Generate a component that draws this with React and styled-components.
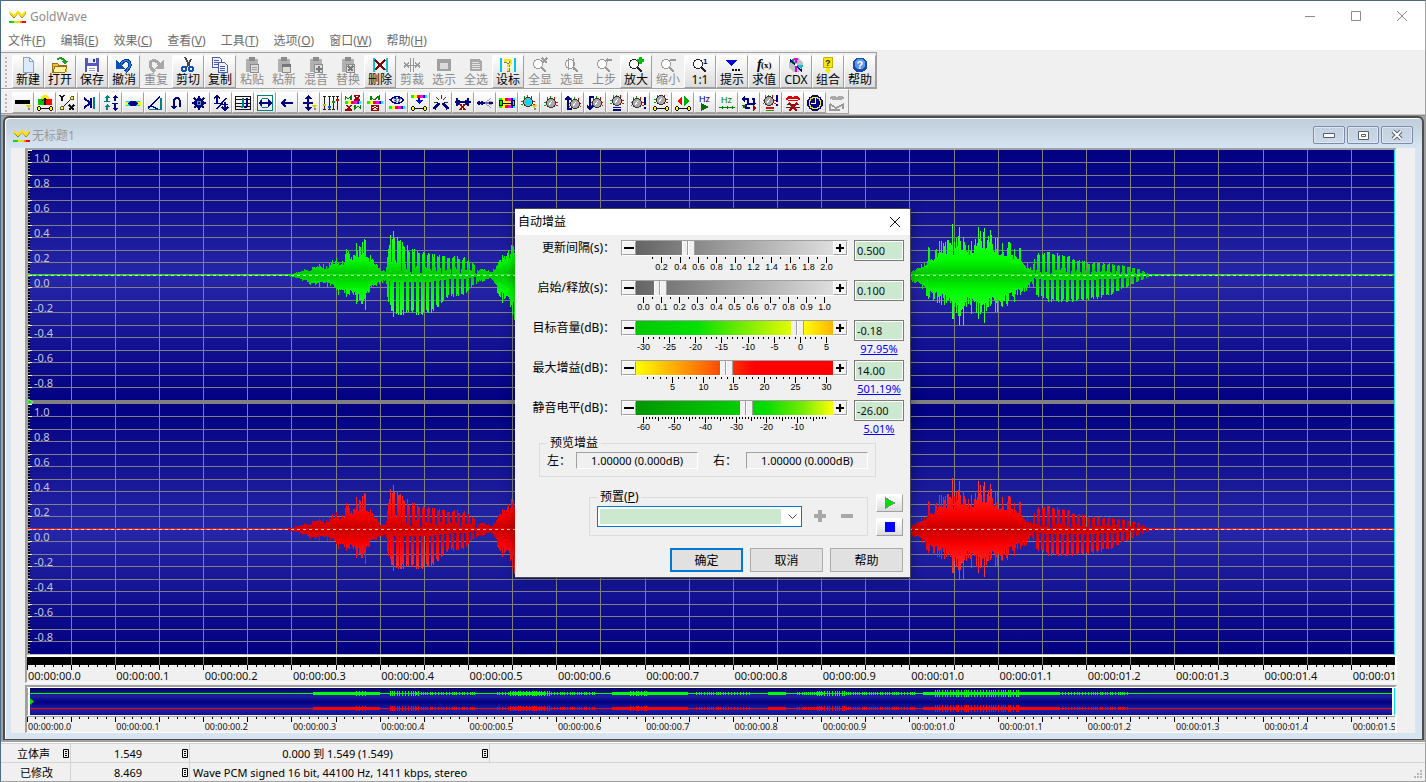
import React from 'react';
import styled, {createGlobalStyle} from 'styled-components';

const GlobalStyle = createGlobalStyle`
  * {
    box-sizing: border-box;
  }
  body {
    margin: 0;
    background: #f0f0f0;
    color: #000;
    font-family: "Noto Sans", "Noto Sans CJK SC", sans-serif;
    font-size: 12px;
  }
  button, input, select {
    font-family: inherit;
    margin: 0;
    padding: 0;
  }
`

/* ---------- main window ---------- */

const Window = styled.div`
  position: relative;
  min-height: 100vh;
  display: flex;
  flex-direction: column;
  background: #f0f0f0;
  border: 1px solid #4a6c88;
  border-right-color: #a0a0a0;
  border-bottom-color: #a0a0a0;
  overflow: hidden;
`

const TitleBar = styled.header`
  display: flex;
  align-items: center;
  height: 30px;
  padding-left: 8px;
  background: #fff;
  color: #8c8c8c;
`

const Title = styled.h1`
  flex: 1;
  margin: 0;
  padding-left: 4px;
  font-size: 12px;
  font-weight: 400;
`

const CaptionButton = styled.button`
  width: 46px;
  height: 30px;
  border: 0;
  background: none;
  color: #8c8c8c;
  display: flex;
  align-items: center;
  justify-content: center;
`

const MenuBar = styled.nav`
  display: flex;
  gap: 15px;
  height: 21px;
  padding-left: 7px;
  background: #fff;
  border-bottom: 2px solid #eee;
`

const MenuItem = styled.button`
  border: 0;
  background: none;
  color: #6d6d6d;
  font-size: 12px;
  line-height: 18px;
  white-space: nowrap;
`

const Toolbar = styled.div`
  align-self: flex-start;
  display: flex;
  height: ${({small}) => small ? 25 : 37}px;
  padding: 2px 0 1px 3px;
  background: #f0f0f0;
  border: 1px solid #a0a0a0;
  border-left: 0;
  border-top-color: ${({small}) => small ? '#fff' : '#a0a0a0'};
`

const ToolbarLine = styled.div`
  border-bottom: 1px solid #c8c8c8;
`

const Grip = styled.div`
  width: 8px;
  margin-top: 2px;
  background: repeating-linear-gradient(#b8b8b8 0 2px, transparent 2px 4px) no-repeat 1px 0 / 2px 100%;
`

const ToolButton = styled.button`
  width: 32px;
  height: 33px;
  flex: none;
  display: flex;
  flex-direction: column;
  align-items: center;
  border: 1px solid transparent;
  padding-top: 1px;
  font-size: 12px;
  line-height: 14px;
  white-space: nowrap;
  color: #000;
  background: linear-gradient(#fff, #e9e9e9 60%, #dcdcdc);
  border-color: #fff #a0a0a0 #a0a0a0 #fff;
  svg {
    flex: none;
  }
  &:disabled {
    color: #8c8c8c;
    background: none;
    border-color: transparent;
  }
`

const EffectButton = styled.button`
  width: 22px;
  height: 21px;
  flex: none;
  display: flex;
  align-items: center;
  justify-content: center;
  border: 1px solid;
  border-color: #fff #a0a0a0 #a0a0a0 #fff;
  background: linear-gradient(#fff, #e4e4e4);
  svg {
    flex: none;
  }
  &:disabled {
    background: none;
    border-color: transparent;
  }
`

/* ---------- document window ---------- */

const Workspace = styled.main`
  flex: 1;
  padding: 0 1px 2px 2px;
  background: #a0a0a0;
  border-top: 1px solid #8c8c8c;
`

const Child = styled.section`
  border: 2px solid #4d4d4d;
  border-width: 2px 2px 1px 2px;
  border-radius: 6px 6px 0 0;
  padding: 0 7px 6px 6px;
  background: linear-gradient(#bfccda, #d7e4f2 30px);
  box-shadow: inset 1px 1px 0 #fff;
`

const ChildTitle = styled.div`
  display: flex;
  align-items: center;
  height: 30px;
  gap: 2px;
  padding: 4px 2px 0;
  color: #999;
  font-size: 12px;
  svg {
    flex: none;
  }
  h2 {
    flex: 1;
    margin: 0;
    font-size: 12px;
    font-weight: 400;
  }
`

const ChildButton = styled.button`
  width: 32px;
  height: 18px;
  border: 1px solid #7d8aa8;
  border-radius: 2px;
  background: linear-gradient(#c4d0df, #ccd9e8);
  box-shadow: inset 0 0 0 1px #dfe8f2;
  display: flex;
  align-items: center;
  justify-content: center;
`

const Content = styled.div`
  padding: 0 18px 0 14px;
  background: #f0f0f0;
`

const Pane = styled.div`
  border: 2px solid #a0a0a0;
  border-right-color: #fff;
  border-bottom: 1px solid #fff;
  margin-bottom: ${({gap}) => gap || 0}px;
`

const Channels = styled.div`
  display: grid;
  grid-template-rows: 254px 251px;
  border-right: 1px solid #00e5ff;
  border-left: 1px solid #00e5ff;
`

const Layered = styled.div`
  display: grid;
  overflow: hidden;
  > * {
    grid-area: 1 / 1;
    min-width: 0;
  }
`

const Plot = styled.svg`
  display: block;
  width: 100%;
  height: ${({$h}) => $h}px;
`

const Levels = styled.div`
  padding-left: 6px;
  color: #c4c4d8;
  font-size: 11px;
  line-height: 16px;
  span {
    display: block;
    height: 25px;
  }
`

const TimeLabels = styled.div`
  display: flex;
  overflow-x: clip;
  overflow-y: visible;
  height: ${({small}) => small ? 10 : 12}px;
  font-size: ${({small}) => small ? 9 : 11}px;
  line-height: ${({small}) => small ? 10 : 12}px;
  color: #111;
  span {
    flex: 0 0 6.456%;
    padding-left: 1px;
    white-space: nowrap;
  }
`

const OverviewBox = styled.div`
  padding: 0 2px 0 2px;
  background: #fff;
  border: 1px solid #00e5ff;
  border-width: 0 1px;
`

/* ---------- status bar ---------- */

const Status = styled.footer`
  border-top: 1px solid #fff;
  background: #f0f0f0;
  font-size: 11px;
`

const StatusRow = styled.div`
  display: grid;
  grid-template-columns: 70px 119px 300px 1fr;
  height: 19px;
  border-top: 1px solid #d4d4d4;
`

const StatusCell = styled.div`
  display: flex;
  align-items: center;
  padding: 0 1px 0 3px;
  border-right: 1px solid ${({line}) => line ? '#d4d4d4' : 'transparent'};
  span {
    flex: 1;
    text-align: ${({left}) => left ? 'left' : 'center'};
    white-space: nowrap;
  }
`

const GripCell = styled.div`
  display: flex;
  align-items: flex-end;
  justify-content: flex-end;
  padding: 0 3px 3px 0;
`

/* ---------- dialog ---------- */

const Dialog = styled.form`
  position: absolute;
  top: 207px;
  left: calc(50% - 198px);
  width: 396px;
  padding-bottom: 5px;
  background: #f0f0f0;
  border: 1px solid #4a4a55;
  border-left: 0;
  box-shadow: 0 1px 12px rgba(0, 0, 0, 0.35);
`

const DialogTitle = styled.div`
  display: flex;
  justify-content: space-between;
  align-items: center;
  height: 26px;
  padding: 0 8px 2px 3px;
  background: #fff;
  font-size: 12px;
`

const CloseButton = styled.button`
  width: 14px;
  height: 14px;
  border: 0;
  background: none;
`

const Settings = styled.div`
  display: grid;
  gap: 4px;
  padding: 5px 6px 0 0;
`

const Setting = styled.div`
  display: grid;
  grid-template-columns: 100px 227px 50px;
  column-gap: 6px;
  height: 36px;
  align-items: start;
  > label {
    text-align: right;
    font-size: 12px;
    line-height: 16px;
    white-space: nowrap;
  }
`

const SliderBar = styled.div`
  display: flex;
  height: 16px;
  border: 1px solid #a0a0a0;
  border-right-color: #fff;
  border-bottom-color: #fff;
`

const StepButton = styled.button`
  width: 14px;
  height: 14px;
  flex: none;
  border: 1px solid;
  border-color: #fff #a0a0a0 #a0a0a0 #fff;
  background: #f4f4f4;
  display: flex;
  align-items: center;
  justify-content: center;
`

const Range = styled.input`
  appearance: none;
  flex: 1;
  min-width: 0;
  height: 14px;
  background: ${({$track}) => $track};
  &::-webkit-slider-thumb {
    appearance: none;
    width: 13px;
    height: 14px;
    background: linear-gradient(90deg, #fff 0 1px, #f0f0f0 1px 5px, #a0a0a0 5px 6px, #fff 6px 7px, #f0f0f0 7px 12px, #a0a0a0 12px);
  }
`

const Scale = styled.svg`
  display: block;
  width: 198px;
  height: 20px;
  margin-left: 15px;
  overflow: visible;
`

const ValueColumn = styled.div`
  text-align: center;
`

const ValueInput = styled.input`
  display: block;
  width: 50px;
  height: 21px;
  border: 1px solid #7a7a7a;
  box-shadow: inset 0 0 0 1px #fff;
  background: #cce8cf;
  padding-left: 2px;
  font-size: 11px;
  color: #111;
`

const Percent = styled.a`
  display: block;
  font-size: 11px;
  line-height: 15px;
  color: #0000ff;
`

const Group = styled.fieldset`
  min-width: 0;
  margin: 0;
  padding: 0 7px;
  border: 1px solid #dcdcdc;
  legend {
    padding: 0 3px;
    margin-left: 0;
    font-size: 12px;
    line-height: 12px;
  }
`

const PreviewGroup = styled(Group)`
  height: 40px;
  margin: 1px 34px 0 24px;
`

const PreviewRow = styled.div`
  display: grid;
  grid-template-columns: 22px 122px 34px 122px;
  column-gap: 7px;
  align-items: center;
  padding-top: 3px;
  line-height: 16px;
  label:nth-of-type(2) {
    padding-left: 8px;
    white-space: nowrap;
  }
`

const Output = styled.output`
  height: 17px;
  border: 1px solid;
  border-color: #a0a0a0 #fff #fff #a0a0a0;
  font-size: 11px;
  line-height: 15px;
  text-align: center;
`

const PresetArea = styled.div`
  display: flex;
  align-items: flex-end;
  gap: 8px;
  margin: 14px 7px 0 74px;
`

const PresetGroup = styled(Group)`
  width: 279px;
  height: 45px;
`

const PresetRow = styled.div`
  display: flex;
  align-items: center;
  padding-top: 3px;
  gap: 9px;
`

const Combo = styled.div`
  position: relative;
  width: 205px;
  height: 21px;
  svg {
    position: absolute;
    right: 5px;
    top: 8px;
    pointer-events: none;
  }
`

const Select = styled.select`
  appearance: none;
  width: 205px;
  height: 21px;
  border: 1px solid #0078d7;
  border-radius: 0;
  background: linear-gradient(#cce8cf, #cce8cf) no-repeat 2px 2px / 181px 15px #fff;
`

const FlatButton = styled.button`
  width: 18px;
  height: 18px;
  border: 0;
  background: none;
`

const PlayColumn = styled.div`
  display: grid;
  gap: 6px;
`

const PlayButton = styled.button`
  width: 27px;
  height: 18px;
  border: 1px solid;
  border-color: #fff #a0a0a0 #a0a0a0 #fff;
  background: linear-gradient(#fff, #dcdcdc);
  display: flex;
  align-items: center;
  justify-content: center;
`

const Actions = styled.div`
  display: flex;
  justify-content: flex-end;
  gap: 7px;
  margin: 12px 7px 0 0;
`

const ActionButton = styled.button`
  width: 73px;
  height: 24px;
  font-size: 12px;
  background: #e1e1e1;
  color: #000;
  border: ${({primary}) => primary ? '2px solid #0078d7' : '1px solid #adadad'};
`

/* ---------- icons ---------- */

// each part is [colour, path, stroke width]; no width means a filled shape,
// and an object in place of the path is a piece of text
const Icon = ({parts, size = 16}) => (
    <svg width={size} height={size} viewBox="0 0 16 16" shapeRendering="crispEdges" aria-hidden="true">
        {parts.map(([color, d, width], i) => {
            if (typeof d === 'object') {
                return <text key={i} x={d.x} y={d.y} fill={color} fontSize={d.s} fontWeight={d.w || 700}
                             fontStyle={d.i ? 'italic' : 'normal'}
                             fontFamily={d.f || 'Liberation Sans'}>{d.t}</text>
            }
            return width
                ? <path key={i} d={d} fill="none" stroke={color} strokeWidth={width}/>
                : <path key={i} d={d} fill={color}/>
        })}
    </svg>
)

const RAINBOW = [
    ['#00ff00', 'M0 0h3v3h-3z'], ['#ffff00', 'M3 0h3v3h-3z'], ['#ff0000', 'M6 0h3v3h-3z'],
    ['#ff00ff', 'M9 0h3v3h-3z'], ['#0000ff', 'M12 0h2v3h-2z'], ['#00ffff', 'M14 0h2v3h-2z'],
];
const rainbow = (y, h = 3) => RAINBOW.map(([c, d]) => [c, d.replace(' 0h', ' ' + y + 'h').replace('v3', 'v' + h)]);

const circle = (x, y, r) => `M${x - r} ${y}a${r} ${r} 0 1 0 ${2 * r} 0a${r} ${r} 0 1 0 ${-2 * r} 0z`;

const clipboard = [
    ['#b0b0b0', 'M2 2h12v13h-12z'], ['#8c8c8c', 'M5 0h6v4h-6z'], ['#dcdcdc', 'M6 7h9v9h-9z'], ['#8c8c8c', 'M6.5 7.5h8v8h-8z', 1],
];
const lens = (c) => [['#fff', circle(6, 7, 4.5)], [c, circle(6, 7, 4.5), 1.3], [c, 'M9 10l5 5', 2.4]];
const knob = (x = 8, y = 8) => [
    ['#a8a8a8', circle(x, y, 4.5)], ['#333', circle(x, y, 4.5), 1], ['#fff', `M${x - 2} ${y + 2}l3 -4`, 1],
    ['#00a000', `M${x - 6} ${y + 3}v-1M${x - 6} ${y}v-1M${x - 4} ${y - 5}h1M${x - 1} ${y - 6}h1`, 1.4],
    ['#ff0000', `M${x + 6} ${y + 3}v-1M${x + 6} ${y}v-1M${x + 3} ${y - 5}h1`, 1.4],
];
const sliderBar = [['#111', 'M2 13.5h12', 1], ['#ffff00', 'M1 12h3v3h-3zM12 12h3v3h-3z'], ['#111', 'M1 11.5h2M1 15.5h2M.5 12v3M3.5 12v3M13 11.5h2M13 15.5h2M12.5 12v3M15.5 12v3', 1]];
const drop = [['#d8d000', 'M11 10h5l-2 3h-1z'], ['#888', 'M13 13h2v2h-2z']];

const TOOLS = [
    {label: '新建', icon: [['#dcebfa', 'M3 0h7l4 4v12h-11z'], ['#8aa4cc', 'M3.5 .5h6l4 4v11h-10z', 1], ['#fff', 'M9 1v4h4z'], ['#8aa4cc', 'M9.5 .5v4h4', 1]]},
    {label: '打开', icon: [['#e8c040', 'M1 6h5l1 2h8v7h-14z'], ['#fff3a0', 'M3 9h13l-3 6h-12z'], ['#9c7010', 'M.5 15v-9h5l1 2h8v1M1 15l2 -6h12l-2 6z', 1], ['#20a020', 'M5 2q6 -2 8 2', 2], ['#20a020', 'M9 4h7l-3 4z']]},
    {label: '保存', icon: [['#5858b8', 'M1 1h13l1 1v13h-14z'], ['#e8ecff', 'M4 1h8v5h-8z'], ['#fff', 'M3 9h10v6h-10z'], ['#333388', 'M9 2h2v3h-2z'], ['#9aa0d8', 'M5 11h6v1h-6zM5 13h6v1h-6z']]},
    {label: '撤消', icon: [['#003c9c', 'M4 9c3 -7 10 -7 10 -1c0 3 -3 5 -5 7', 3.4], ['#2878e0', 'M4 9c3 -7 10 -7 10 -1c0 3 -3 5 -5 7', 1.4], ['#0050b8', 'M0 2v10h9z']]},
    {label: '重复', off: true, icon: [['#a8a8a8', 'M12 9c-3 -7 -10 -7 -10 -1c0 3 3 5 5 7', 3], ['#a8a8a8', 'M16 2v10h-9z']]},
    {label: '剪切', icon: [['#445', 'M5 0l5 10M11 2l-4 8', 1.4], ['#1450b0', circle(4, 12, 2.2), 2], ['#1450b0', circle(11, 12, 2.2), 2]]},
    {label: '复制', icon: [['#eef2ff', 'M1 1h7l2 2v8h-9z'], ['#4a5aa8', 'M.5 .5h7l2 2v8h-9zM2 3.5h5M2 5.5h5M2 7.5h4', 1], ['#eef2ff', 'M6 5h7l2 2v9h-9z'], ['#4a5aa8', 'M6.5 5.5h6l3 3v7h-9zM8 9.5h5M8 11.5h5M8 13.5h5', 1]]},
    {label: '粘贴', off: true, icon: [...clipboard, ['#a0a0a0', 'M8 10.5h5M8 12.5h5', 1]]},
    {label: '粘新', off: true, icon: [...clipboard, ['#777', 'M6 7h9v3h-9z']]},
    {label: '混音', off: true, icon: [...clipboard, ['#777', 'M10.5 8.5v6M7.5 11.5h6', 2]]},
    {label: '替换', off: true, icon: [...clipboard, ['#777', 'M8 9l5 5M13 9l-5 5', 1.8]]},
    {label: '删除', icon: [['#00c8d8', 'M1 1h2v14h-2zM14 1h2v14h-2z'], ['#900000', 'M3 3l10 10M13 3l-10 10', 2], ['#222', 'M4 3l10 10', .8]]},
    {label: '剪裁', off: true, icon: [['#999', 'M6.5 1v14M9.5 1v14', 1], ['#999', 'M0 5l5 6M5 5l-5 6M11 5l5 6M16 5l-5 6M0 8.5h16', 1.3]]},
    {label: '选示', off: true, icon: [['#a0a0a0', 'M1 2h14v12h-14z'], ['#dadada', 'M4 6h8v6h-8z']]},
    {label: '全选', off: true, icon: [['#a8a8a8', 'M2 2h9l3 3v9h-12z'], ['#e4e4e4', 'M4 5.5h7M4 7.5h8M4 9.5h8M4 11.5h8', 1]]},
    {label: '设标', icon: [['#00c8e8', 'M0 1h2v14h-2zM14 1h2v14h-2z'], ['#777', 'M4 2h7v1h1v4h-1v1h-1v2h-3v-4h2v-2h-2v2h-3zM7 11h3v4h-3z'], ['#f8e800', 'M4 2h7v1h1v4h-1v1h-2v2h-2v-3h2v-1h1v-2h-3v1h-3zM7 11h2v3h-2z']]},
    {label: '全显', off: true, icon: [...lens('#999'), ['#999', 'M10 1l5 5M15 1l-5 5', 1.8]]},
    {label: '选显', off: true, icon: [...lens('#999'), ['#999', 'M4.5 1v12M9.5 1v12', 1]]},
    {label: '上步', off: true, icon: [...lens('#999'), ['#999', 'M10 3h6', 2], ['#999', 'M9 3l3 -3v6z']]},
    {label: '放大', icon: [...lens('#222'), ['#00c000', 'M11 0h3v2h2v3h-2v2h-3v-2h-2v-3h2z']]},
    {label: '缩小', off: true, icon: [...lens('#999'), ['#999', 'M10 3h6', 2]]},
    {label: '1:1', icon: [...lens('#222'), ['#000080', {t: '1', x: 11, y: 7, s: 8}]]},
    {label: '提示', icon: [['#0000e0', 'M1 3h13l-6.500 6z'], ['#111', 'M8 12h2v2h-2zM11 12h2v2h-2zM14 12h2v2h-2z']]},
    {label: '求值', icon: [['#000', {t: 'f', x: 1, y: 12, s: 14, i: true, f: 'Liberation Serif'}], ['#000', {t: '(x)', x: 5, y: 11, s: 9, f: 'Liberation Serif'}]]},
    {label: 'CDX', icon: [['#c0c0c8', circle(8, 8, 7)], ['#00a040', 'M8 8l-7 -3l4 -4z'], ['#e000e0', 'M8 8l-2 -7h4z'], ['#0000a0', 'M2 3l12 11', 1.6], ['#00c0c0', 'M8 8l6 4l1 -4z'], ['#d000d0', 'M8 8v7', 2], ['#fff', circle(8, 8, 1.4)]]},
    {label: '组合', icon: [['#f8e800', 'M3 0h10v11h-3v2h2l-4 3l-4 -3h2v-2h-3z'], ['#a09000', 'M3.500 .5h9v10h-9z', .6], ['#222', {t: '?', x: 5, y: 9, s: 9}]]},
    {label: '帮助', icon: [['#1a4cb0', circle(8, 8, 7.5)], ['#5a98e8', circle(8, 7, 5.5)], ['#fff', {t: '?', x: 4.6, y: 12, s: 11}]]},
];

const EFFECTS = [
    {name: '设备', icon: [['#000', 'M0 5h15v4h-15z'], ...drop]},
    {name: '音箱', icon: [['#ffe800', circle(8, 4, 4)], ['#00c000', circle(4, 7, 3.500)], ['#ff0000', circle(12, 7, 3.500)], ['#111', 'M8 10v-7M5 6l3 -3l3 3', 1.4], ...sliderBar]},
    {name: '表达式', icon: [['#111', 'M1 0l2 3l2 -3M3 3v3', 1.6], ['#111', 'M10 10l5 5M15 10l-5 5', 1.6], ['#111', 'M3 13l10 -10', 1], ['#ffff00', circle(3, 13, 2)], ['#ffff00', circle(13, 3, 2)], ['#333', circle(3, 13, 2), .8], ['#333', circle(13, 3, 2), .8]]},
    {name: '偏移', icon: [['#000080', 'M3 3l6 5M10 3v10M3 13l6 -5', 2], ['#008080', 'M13 2v12', 1.6]]},
    {name: '反转', icon: [['#008080', 'M4 0l3 3h-2v3h-2v-3h-2zM4 9l3 3h-2v3h-2v-3h-2z'], ['#000080', 'M12 0l3 3h-2v3h-2v-3h-2zM12 16l3 -3h-2v-4h-2v4h-2z'], ['#008080', 'M1 6h6v1h-6z'], ['#000080', 'M9 8h6v1h-6z']]},
    {name: '声像', icon: [['#00d8f0', 'M0 6h16v5h-16z'], ['#ffff00', 'M0 6l5 2.500l-5 2.500zM16 6l-5 2.500l5 2.500z'], ['#000080', 'M3 8.500l3 -2.500h4l3 2.500l-3 2.500h-4z']]},
    {name: '淡入', icon: [['#008080', 'M2 14.500h12v-12', 1.4], ['#000080', 'M1 13l12 -11M4 11l7 3', 1.5]]},
    {name: '回声', icon: [['#000080', 'M5 13v-6q0 -4 3 -4t3 4v5M2.500 11l2.500 2.500l2.500 -2.500', 1.8]]},
    {name: '滤波', icon: [['#000080', circle(8, 8, 5)], ['#000080', 'M8 1v14M1 8h14M3 3l10 10M13 3l-10 10', 1.8], ['#50a0a0', circle(8, 8, 2), 1]]},
    {name: '音调', icon: [['#000080', 'M4 1v8M1 3.500l3 -2.500l3 2.500M1 8.500h6M12 7v8M9 12l3 3l3 -3M9 9.500h6M4 14l9 -11', 1.6]]},
    {name: '乐谱', icon: [['#111', 'M.5 1.500h15v13h-15zM1 4.500h14M1 8h14M1 11.500h14', 1], ['#008080', 'M8 3v9M6 12h2', 1.8], ['#000080', 'M12 3v9M9 12h3', 1.8]]},
    {name: '变形', icon: [['#008080', 'M.5 .5h15v15h-15z', 1], ['#008080', circle(8, 8, 5), 1], ['#000080', 'M1 8l4 -4v3h6v-3l4 4l-4 4v-3h-6v3z']]},
    {name: '倒退', icon: [['#000080', 'M3 8h11M7 4.500l-4 3.500l4 3.500', 2]]},
    {name: '动态', icon: [['#000080', 'M7 0l4 4h-3v3h4v2h-4v3h3l-4 4l-4 -4h3v-3h-4v-2h4v-3h-3z'], ...drop]},
    {name: '均衡', icon: [['#222', 'M1.500 1v14M6.500 1v14M10.500 1v14M14.500 1v14', 1], ['#222', 'M0 1.500h3M5 1.500h3M9 1.500h3M13 1.500h3M0 14.500h3M5 14.500h3M9 14.500h3', 1], ['#c0c000', 'M0 9h3v2h-3z'], ['#00a000', 'M9 6h3v2h-3z'], ['#0060d0', 'M5 11h3v2h-3z'], ['#d00000', 'M13 4h3v2h-3z']]},
    {name: '矩阵', icon: [...rainbow(6), ['#008000', 'M0 5v-4l3 3l3 -3v4M10 10v4l3 -3l3 3v-4', 1.2], ['#a00000', 'M9 1l6 4M15 1l-6 4M9 .6h6M9 5h6M1 10l6 5M7 10l-6 5M0 15h7', 1.2]]},
    {name: '高低通', icon: [...rainbow(6), ['#008000', 'M4 5v-4M4 2l3 3l5 -4v4', 1.2], ['#a00000', 'M4.500 10.500h7v5h-7zM4 10l8 5M12 10l-8 5', 1]]},
    {name: '降噪', icon: [['#fff', 'M1 5q7 -7 14 0q-7 7 -14 0z'], ['#000080', 'M1 5q7 -7 14 0q-7 7 -14 0z', 1.4], ['#000080', {t: '37', x: 4, y: 8, s: 7}], ...rainbow(11)]},
    {name: '参量', icon: [...rainbow(0), ['#000080', 'M8 3v3', 2], ['#0000e0', 'M4 5h8l-4 4z'], ...sliderBar]},
    {name: '爆音', icon: [['#000080', 'M1 14l5 -6M15 14l-5 -6', 3], ['#333', 'M8 0v4M3 2l3 3M13 2l-3 3M1 7h3M12 7h3', 1]]},
    {name: '静音剪除', icon: [['#000080', 'M0 7h16M2 3v8M4 5v5M13 3v8M11 5v5', 2], ['#a00000', 'M5 9l5 6M10 9l-5 6', 1.8]]},
    {name: '平滑', icon: [['#000080', 'M0 8h16M2 6v4M5 6v4', 1.6], ['#8888a0', 'M8 8l6 -5M8 8l6 5M8 8l7 -2M8 8l7 2', .8]]},
    {name: '频谱', icon: [...rainbow(3, 10), ['#ffff00', 'M3 6h10v4h-10z'], ['#111', 'M.5 5.500h3v5h-3zM12.500 5.500h3v5h-3zM3.500 8h9', 1]]},
    {name: '音量', icon: [...knob(7, 7), ['#00d8f0', circle(7, 7, 3.500)], ...drop]},
    {name: '旋钮', icon: knob()},
    {name: '自动增益', icon: [...knob(10, 9), ['#000080', 'M7 14h-4v-12M0 5l3 -3l3 3', 1.8]]},
    {name: '淡出', icon: [...knob(10, 8), ['#000080', 'M7 2h-4v12M0 11l3 3l3 -3', 1.8]]},
    {name: '匹配', icon: [...knob(8, 6), ['#000080', 'M4 12h8v1h-8zM4 14h8v2h-8z']]},
    {name: '最大化', icon: [...knob(6, 8), ['#000080', 'M13 2h2v8h-2zM13 12h2v2h-2z']]},
    {name: '外形', icon: [...knob(8, 5), ...sliderBar]},
    {name: '左右', icon: [['#ff0000', 'M7 1v10l-5 -5z'], ['#00b000', 'M9 1v10l5 -5z'], ...sliderBar]},
    {name: '播放速率', icon: [['#000080', {t: 'Hz', x: 2, y: 7, s: 9, w: 400}], ['#007000', 'M4 8l8 4l-8 4z']]},
    {name: '重采样', icon: [['#008000', {t: 'Hz', x: 2, y: 8, s: 9, w: 400}], ['#008000', 'M0 12.500h16M3 11v3M8 11v3M13 11v3', 1]]},
    {name: '声道', icon: [['#000080', 'M3 4h4v5h4M11 4h2v5M5 9v4h4', 1.4], ['#000080', 'M0 4l4 -3v6zM15 8l-3 3l-2 -3z'], ['#a00000', 'M12 10l4 3l-4 3z'], ['#007000', 'M1 10h4l-2 4z']]},
    {name: '限幅', icon: [...knob(6, 6), ['#000080', 'M13 0h2v7h-2zM13 9h2v2h-2z'], ['#e00000', 'M3 12h8v2h-8z'], ['#00a000', 'M3 15h8v1h-8z']]},
    {name: '人声消除', icon: [['#e00000', 'M0 4q4 -5 8 -2q4 -3 8 2q-8 5 -16 0z'], ['#fff', 'M3 4h10', 1], ['#333', 'M2 9h12M1 12h14', 1], ['#b00000', 'M4 8l8 8M12 8l-8 8', 1.8]]},
    {name: '定时', icon: [['#000080', circle(8, 8, 8)], ['#ffe800', circle(8, 8, 6.500)], ['#000080', circle(8, 8, 5)], ['#fff', 'M8.500 9v-6M9 8.500h-5', 1.2]]},
    {name: '语音', off: true, icon: [['#aaa', 'M0 3q4 -4 8 -1q4 -3 8 1q-8 5 -16 0z'], ['#999', 'M1 9l6 4l8 -4M1 9v6h10M14 9v5', 1.6]]},
];

const MENUS = [
    ['文件', 'F'], ['编辑', 'E'], ['效果', 'C'], ['查看', 'V'], ['工具', 'T'], ['选项', 'O'], ['窗口', 'W'], ['帮助', 'H'],
];

const Logo = () => (
    <svg width="17" height="17" viewBox="0 0 17 17" aria-hidden="true">
        <path d="M1 6l4 4l4 -5l4 5l4 -5" fill="none" stroke="#8a7a10"/>
        <path d="M0 4l5 4l4 -4l4 4l4 -5" fill="none" stroke="#ffe000" strokeWidth="2"/>
        <path d="M0 13h5v2h-5z" fill="#00e000"/>
        <path d="M5 13h3v2h-3z" fill="#d0f000"/>
        <path d="M8 13h3v2h-3z" fill="#ffd000"/>
        <path d="M11 13h2v2h-2z" fill="#ff8000"/>
        <path d="M13 13h4v2h-4z" fill="#ff0000"/>
    </svg>
)

/* ---------- waveform ---------- */

const WIDTH = 1368;
const BEAT = 44.145;

const UPPER = [
    [260, 0], [268, 3], [279, 8], [283, 6], [287, 13], [300, 10], [305, 19], [315, 15], [319, 26], [329, 25], [337, 37],
    [339, 20], [345, 24], [349, 15], [353, 6], [358, 5], [360, 20], [363, 40], [366, 46], [372, 35], [385, 27], [400, 24],
    [415, 20], [437, 19], [443, 14], [451, 6], [456, 9], [464, 3], [468, 10], [478, 27], [487, 36], [540, 45], [700, 30],
    [860, 10], [884, 6], [894, 12], [899, 18], [901, 30], [906, 22], [912, 33], [922, 37], [924, 48], [926, 36], [932, 48], [936, 40],
    [941, 30], [948, 42], [951, 48], [957, 45], [963, 46], [967, 40], [975, 32], [982, 36], [988, 24], [993, 28], [996, 16], [1005, 8],
    [1008, 23], [1023, 24], [1040, 20], [1056, 14], [1083, 12], [1100, 9], [1113, 6], [1121, 1], [1128, 0],
];
const LOWER = [
    [260, 0], [275, 5], [287, 12], [295, 10], [305, 13], [310, 22], [321, 22], [329, 28], [336, 36], [341, 19], [350, 11],
    [358, 5], [361, 30], [366, 41], [383, 38], [393, 40], [404, 38], [420, 22], [437, 20], [445, 10], [464, 3], [473, 24],
    [487, 46], [700, 40], [880, 5], [893, 10], [901, 24], [909, 28], [920, 32], [925, 44], [932, 50], [937, 50], [940, 34],
    [949, 44], [957, 48], [961, 36], [971, 38], [983, 28], [995, 20], [1005, 8], [1008, 20], [1023, 27], [1058, 26], [1083, 20],
    [1098, 12], [1113, 5], [1121, 1], [1128, 0],
];

// single samples that stand out of the envelope: [x, above, below]
const PEAKS = [
    [319, 26, 22], [329, 32, 29], [332, 29, 24], [335, 33, 29], [338, 35, 35], [363, 40, 30], [366, 44, 41], [371, 34, 38], [373, 35, 40],
    [901, 28, 24], [902, 27, 22], [912, 34, 28], [914, 34, 24], [920, 35, 26], [925, 51, 44], [929, 31, 38], [932, 48, 50],
    [936, 38, 50], [944, 34, 26], [951, 48, 44], [953, 44, 39], [957, 47, 48], [961, 39, 32], [963, 45, 31], [968, 37, 37], [970, 37, 37],
    [981, 33, 26], [987, 26, 27], [993, 27, 20],
];

const envelope = (points, x) => {
    for (let i = 1; i < points.length; i++) {
        if (x <= points[i][0]) {
            const [x0, y0] = points[i - 1];
            const [x1, y1] = points[i];
            return y0 + (y1 - y0) * (x - x0) / (x1 - x0);
        }
    }
    return 0;
}

const noise = (x) => {
    const v = Math.sin(x * 12.9898) * 43758.5453;
    return v - Math.floor(v);
}

const wavePath = (center) => {
    let d = '';
    for (let x = 260; x < 1128; x++) {
        const striped = (x > 359 && x < 450) || x > 1005;
        const n = noise(x);
        const m = noise(x + 700);
        const up = striped ? ((x % 5) < 3 ? 0.8 + 0.2 * n : 0.4 * n) : 0.56 + 0.44 * n * n;
        const down = striped ? ((x + 1) % 5 < 3 ? 0.85 + 0.15 * m : 0.15) : 0.58 + 0.42 * m * m;
        d += `M${x + .5} ${Math.round(center - envelope(UPPER, x) * up)}V${Math.round(center + 1 + envelope(LOWER, x) * down)}`;
    }
    PEAKS.forEach(([x, above, below]) => {
        d += `M${x + .5} ${center - above}V${center + below}`;
    });
    return d;
}

const beats = Array.from({length: 30}, (_, i) => Math.floor((i + 1) * BEAT) + .5);

const Channel = ({id, height, center, first, colors}) => {
    const lines = Array.from({length: 19}, (_, i) => Math.floor(center + (i - 9) * 12.5) + .5);
    const ticks = Array.from({length: 20}, (_, i) => Math.floor(center + (i - 10) * 12.5) + .5);
    return (
        <Layered>
            <Plot $h={height} viewBox={`1 0 ${WIDTH - 2} ${height}`} preserveAspectRatio="none">
                <defs>
                    <linearGradient id={id + 'bg'} x1="0" y1="0" x2="0" y2="1">
                        <stop offset="0" stopColor="#000080"/>
                        <stop offset=".5" stopColor="#2626a8"/>
                        <stop offset="1" stopColor="#000080"/>
                    </linearGradient>
                    <linearGradient id={id + 'wave'} gradientUnits="userSpaceOnUse" x1="0" y1={center - 50} x2="0" y2={center + 50}>
                        <stop offset="0" stopColor={colors[2]}/>
                        <stop offset=".35" stopColor={colors[1]}/>
                        <stop offset=".5" stopColor={colors[0]}/>
                        <stop offset=".65" stopColor={colors[1]}/>
                        <stop offset="1" stopColor={colors[2]}/>
                    </linearGradient>
                </defs>
                <rect width={WIDTH} height={height} fill={`url(#${id}bg)`}/>
                <path d={lines.map(y => `M0 ${y}H${WIDTH}`).join('') + beats.map(x => `M${x} 0V${height}`).join('')} stroke="#808080"/>
                <path d={`M2 0V${height}`} stroke="#000" strokeWidth="2"/>
                <path d={`M2 0V${height}`} stroke="#fff" strokeWidth="1" strokeDasharray="1 2"/>
                <path d={ticks.map(y => `M1 ${y}h4`).join('')} stroke="#fff"/>
                <path d={wavePath(center)} stroke={`url(#${id}wave)`}/>
                <path d={`M0 ${center - .5}H${WIDTH}`} stroke={colors[1]}/>
                <path d={`M0 ${center + .5}H${WIDTH}`} stroke="#d8d8d8" strokeDasharray="3 3"/>
                {first && <path d={`M0 ${height - 1.5}H${WIDTH}`} stroke="#808080" strokeWidth="5"/>}
                {first && <path d={`M1 ${height - 5}v6l5 -3z`} fill="#00e000" stroke="#fff" strokeWidth=".5"/>}
                {!first && <path d={`M0 ${height - .5}H${WIDTH}`} stroke="#c0c0c0"/>}
            </Plot>
            <Levels>
                {['1.0', '0.8', '0.6', '0.4', '0.2', '0.0', '-0.2', '-0.4', '-0.6', '-0.8'].map(l => <span key={l}>{l}</span>)}
            </Levels>
        </Layered>
    )
}

const Ruler = ({small}) => {
    let d = '';
    for (let i = 0; i < 155; i++) {
        d += `M${Math.floor(i * BEAT / 5) + .5} 0v${i % 5 ? 2 : 5}`;
    }
    return (
        <>
            <Plot $h={5} viewBox={`0 0 ${WIDTH} 5`} preserveAspectRatio="none">
                <path d={d} stroke="#000"/>
            </Plot>
            <TimeLabels small={small ? 1 : undefined}>
                {Array.from({length: 16}, (_, i) => (
                    <span key={i}>{`00:00:0${Math.floor(i / 10)}.${i % 10}`}</span>
                ))}
            </TimeLabels>
        </>
    )
}

// [from, to, half height, solid]
const BURSTS = [
    [283, 350, 1, 1], [326, 338, 2, 0], [360, 390, 2, 0], [386, 445, 1, 0], [467, 482, 1, 0], [480, 520, 2, 0], [482, 515, 1, 1],
    [515, 566, 1, 0], [582, 658, 1, 1], [600, 618, 2, 0], [666, 722, 1, 0], [738, 756, 1, 1], [767, 885, 1, 0], [787, 815, 2, 0],
    [893, 1030, 1, 1], [905, 990, 3, 0], [1000, 1098, 1, 0],
];

const overviewPath = (y) => {
    let d = `M0 ${y + .5}H1364`;
    BURSTS.forEach(([from, to, h, solid]) => {
        for (let x = from; x < to; x += solid ? 1 : 2 + Math.floor(noise(x) * 2)) {
            d += `M${x + .5} ${y - h}V${y + h + 1}`;
        }
    });
    return d;
}

const Overview = () => (
    <Plot $h={27} viewBox="0 0 1362 27" preserveAspectRatio="none">
        <defs>
            <linearGradient id="overview" x1="0" y1="0" x2="0" y2="1">
                <stop offset="0" stopColor="#000060"/>
                <stop offset=".3" stopColor="#2020a0"/>
                <stop offset=".52" stopColor="#000080"/>
                <stop offset=".8" stopColor="#2020a0"/>
                <stop offset="1" stopColor="#101090"/>
            </linearGradient>
        </defs>
        <rect width="1364" height="27" fill="url(#overview)"/>
        <path d={overviewPath(5)} stroke="#00ff00"/>
        <path d={overviewPath(20)} stroke="#ff0000"/>
        <path d="M0 10v7l4 -3.500z" fill="#00e000"/>
    </Plot>
)

/* ---------- dialog parts ---------- */

const SETTINGS = [
    {
        id: 'interval', label: '更新间隔(s)：', min: 0, max: 2.02, value: 0.5, text: '0.500',
        minor: 0.1, major: 0.2, from: 0.1, step: 0.2, digits: 1, ends: [0.2, 2],
        track: 'linear-gradient(90deg, #646464, #dedede)',
    },
    {
        id: 'attack', label: '启始/释放(s)：', min: 0, max: 1.02, value: 0.1, text: '0.100',
        minor: 0.05, major: 0.1, from: 0, step: 0.1, digits: 1, ends: [0, 1],
        track: 'linear-gradient(90deg, #646464, #dedede)',
    },
    {
        id: 'target', label: '目标音量(dB)：', min: -30, max: 5.4, value: -0.18, text: '-0.18', percent: '97.95%',
        minor: 1, major: 5, from: -30, step: 5, digits: 0, ends: [-30, 5],
        track: 'linear-gradient(90deg, #00c800, #00e000 30%, #78ec00 55%, #ffff00 85%, #ffb400)',
    },
    {
        id: 'maximum', label: '最大增益(dB)：', min: 0.3, max: 30.4, value: 14, text: '14.00', percent: '501.19%',
        minor: 1, major: 5, from: 1, step: 5, digits: 0, ends: [5, 30],
        track: 'linear-gradient(90deg, #ffff00, #ff8000 30%, #ff0000 60%)',
    },
    {
        id: 'silence', label: '静音电平(dB)：', min: -60, max: 0, value: -26, text: '-26.00', percent: '5.01%',
        minor: 1, major: 5, from: -60, step: 10, digits: 0, ends: [-60, -10],
        track: 'linear-gradient(90deg, #009600, #00dc00 65%, #78ec00 85%, #ffff00)',
    },
];

const ScaleMarks = ({s}) => {
    const at = v => Math.round(7 + (v - s.min) / (s.max - s.min) * 185) + .5;
    const marks = [];
    const labels = [];
    for (let v = s.from; v <= s.max - s.minor / 10; v += s.minor) {
        const whole = Math.abs(v / s.major - Math.round(v / s.major)) < 0.01;
        const long = Math.abs(v / s.step - Math.round(v / s.step)) < 0.01;
        marks.push(`M${at(v)} 1v${long ? 6 : whole ? 4 : 2}`);
    }
    for (let v = s.ends[0]; v <= s.ends[1] + 0.01; v += s.step) {
        labels.push(v);
    }
    return (
        <Scale viewBox="0 0 198 20">
            <path d={marks.join('')} stroke="#000"/>
            {labels.map(v => (
                <text key={v} x={at(v)} y="14" textAnchor="middle" fontSize="9" fontFamily="Liberation Sans">
                    {v.toFixed(s.digits)}
                </text>
            ))}
        </Scale>
    )
}

const SettingRow = ({s}) => (
    <Setting>
        <label htmlFor={s.id}>{s.label}</label>
        <div>
            <SliderBar>
                <StepButton type="button" aria-label="减小"><Icon size={10} parts={[['#000', 'M0 6h16v4h-16z']]}/></StepButton>
                <Range type="range" aria-label={s.label} min={s.min} max={s.max} step="0.01" defaultValue={s.value} $track={s.track}/>
                <StepButton type="button" aria-label="增大"><Icon size={10} parts={[['#000', 'M1 6h14v4h-14zM6 1h4v14h-4z']]}/></StepButton>
            </SliderBar>
            <ScaleMarks s={s}/>
        </div>
        <ValueColumn>
            <ValueInput id={s.id} type="text" defaultValue={s.text}/>
            {s.percent && <Percent href="#">{s.percent}</Percent>}
        </ValueColumn>
    </Setting>
)

const AutoGainDialog = () => (
    <Dialog role="dialog" aria-label="自动增益" onSubmit={e => e.preventDefault()}>
        <DialogTitle>
            自动增益
            <CloseButton type="button" aria-label="关闭">
                <svg width="12" height="12" viewBox="0 0 12 12"><path d="M1 1l10 10M11 1l-10 10" stroke="#111"/></svg>
            </CloseButton>
        </DialogTitle>
        <Settings>
            {SETTINGS.map(s => <SettingRow key={s.id} s={s}/>)}
        </Settings>
        <PreviewGroup>
            <legend>预览增益</legend>
            <PreviewRow>
                <label htmlFor="left">左：</label>
                <Output id="left">1.00000 (0.000dB)</Output>
                <label htmlFor="right">右：</label>
                <Output id="right">1.00000 (0.000dB)</Output>
            </PreviewRow>
        </PreviewGroup>
        <PresetArea>
            <PresetGroup>
                <legend><label htmlFor="preset">预置(<u>P</u>)</label></legend>
                <PresetRow>
                    <Combo>
                        <Select id="preset"><option></option></Select>
                        <svg width="9" height="6" viewBox="0 0 9 6"><path d="M.5 .5l4 4l4 -4" fill="none" stroke="#444"/></svg>
                    </Combo>
                    <FlatButton type="button" disabled aria-label="添加"><Icon parts={[['#a8a8a8', 'M6 2h4v4h4v4h-4v4h-4v-4h-4v-4h4z']]}/></FlatButton>
                    <FlatButton type="button" disabled aria-label="移除"><Icon parts={[['#a8a8a8', 'M2 6h12v4h-12z']]}/></FlatButton>
                </PresetRow>
            </PresetGroup>
            <PlayColumn>
                <PlayButton type="button" aria-label="播放"><Icon size={12} parts={[['#888', 'M1 0l15 8l-15 8z'], ['#00e000', 'M1 1l13 7l-13 7z']]}/></PlayButton>
                <PlayButton type="button" aria-label="停止"><Icon size={10} parts={[['#0000ff', 'M0 0h16v16h-16z']]}/></PlayButton>
            </PlayColumn>
        </PresetArea>
        <Actions>
            <ActionButton primary="true" type="submit">确定</ActionButton>
            <ActionButton type="button">取消</ActionButton>
            <ActionButton type="button">帮助</ActionButton>
        </Actions>
    </Dialog>
)

const Mark = () => (
    <svg width="6" height="9" viewBox="0 0 6 9"><path d="M.5 .5h5v8h-5zM2 2.500h2M2 4.500h2M2 6.500h2" fill="none" stroke="#000"/></svg>
)

const App = () => {
    return (
        <Window>
            <GlobalStyle/>
            <TitleBar>
                <Logo/>
                <Title>GoldWave</Title>
                <CaptionButton aria-label="最小化"><svg width="10" height="10"><path d="M0 5.500h10" stroke="currentColor"/></svg></CaptionButton>
                <CaptionButton aria-label="最大化"><svg width="10" height="10"><path d="M.5 .5h9v9h-9z" fill="none" stroke="currentColor"/></svg></CaptionButton>
                <CaptionButton aria-label="关闭"><svg width="10" height="10"><path d="M0 0l10 10M10 0l-10 10" stroke="currentColor"/></svg></CaptionButton>
            </TitleBar>
            <MenuBar>
                {MENUS.map(([label, key]) => <MenuItem key={key}>{label}(<u>{key}</u>)</MenuItem>)}
            </MenuBar>
            <Toolbar>
                <Grip/>
                {TOOLS.map(t => (
                    <ToolButton key={t.label} disabled={t.off}><Icon parts={t.icon}/>{t.label}</ToolButton>
                ))}
            </Toolbar>
            <Toolbar small="true">
                <Grip/>
                {EFFECTS.map(e => (
                    <EffectButton key={e.name} disabled={e.off} aria-label={e.name}><Icon parts={e.icon}/></EffectButton>
                ))}
            </Toolbar>
            <ToolbarLine/>
            <Workspace>
                <Child>
                    <ChildTitle>
                        <Logo/>
                        <h2>无标题1</h2>
                        <ChildButton aria-label="最小化"><svg width="12" height="5"><path d="M.5 .5h11v4h-11z" fill="#fff" stroke="#555c70"/></svg></ChildButton>
                        <ChildButton aria-label="还原"><svg width="11" height="9"><path d="M.5 .5h10v8h-10zM3.500 3.500h4v2h-4z" fill="#fff" stroke="#555c70"/></svg></ChildButton>
                        <ChildButton aria-label="关闭"><svg width="12" height="10"><path d="M2 1l8 8M10 1l-8 8" stroke="#555c70" strokeWidth="4"/><path d="M2 1l8 8M10 1l-8 8" stroke="#fff" strokeWidth="2"/></svg></ChildButton>
                    </ChildTitle>
                    <Content>
                        <Pane gap={2}>
                            <Channels>
                                <Channel id="left-" first height={254} center={125} colors={['#00c400', '#00fa00', '#40ff40']}/>
                                <Channel id="right-" height={251} center={125} colors={['#c80000', '#fa0000', '#ff4040']}/>
                            </Channels>
                            <Plot $h={10} viewBox={`0 0 ${WIDTH} 10`} preserveAspectRatio="none">
                                <path d={`M0 1H${WIDTH}`} stroke="#fff" strokeWidth="2"/>
                                <path d={`M0 2V10H${WIDTH}V2z`} fill="#000"/>
                                <path d={beats.map(x => `M${x} 2V10`).join('')} stroke="#808080"/>
                            </Plot>
                            <Ruler/>
                        </Pane>
                        <Pane>
                            <Plot $h={1} viewBox="0 0 10 1" preserveAspectRatio="none"><path d="M0 0h10v1h-10z" fill="#fff"/></Plot>
                            <OverviewBox>
                                <Overview/>
                            </OverviewBox>
                            <Plot $h={2} viewBox="0 0 10 2" preserveAspectRatio="none"><path d="M0 1h10v1h-10z" fill="#a0a0a0"/></Plot>
                            <Ruler small/>
                        </Pane>
                    </Content>
                </Child>
            </Workspace>
            <Status>
                <StatusRow>
                    <StatusCell line="true"><span>立体声</span><Mark/></StatusCell>
                    <StatusCell line="true"><span>1.549</span><Mark/></StatusCell>
                    <StatusCell line="true"><span>0.000 到 1.549 (1.549)</span><Mark/></StatusCell>
                    <StatusCell/>
                </StatusRow>
                <StatusRow>
                    <StatusCell line="true"><span>已修改</span></StatusCell>
                    <StatusCell line="true"><span>8.469</span><Mark/></StatusCell>
                    <StatusCell left="true"><span>Wave PCM signed 16 bit, 44100 Hz, 1411 kbps, stereo</span></StatusCell>
                    <GripCell>
                        <svg width="8" height="8"><path d="M6 0h2v2h-2zM3 3h2v2h-2zM6 3h2v2h-2zM0 6h2v2h-2zM3 6h2v2h-2zM6 6h2v2h-2z" fill="#b8b8b8"/></svg>
                    </GripCell>
                </StatusRow>
            </Status>
            <AutoGainDialog/>
        </Window>
    );
};

export default App;
